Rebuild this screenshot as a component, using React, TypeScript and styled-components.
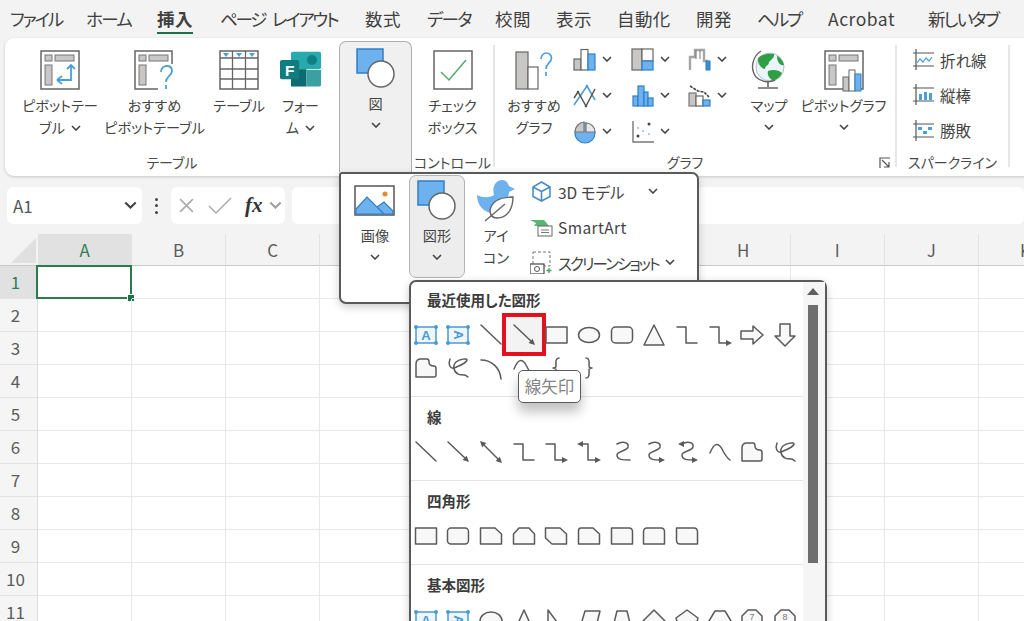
import React from 'react';
import styled, { createGlobalStyle } from 'styled-components';

const GlobalStyle = createGlobalStyle`
  html, body {
    margin: 0;
    padding: 0;
    background: #f3f3f3;
  }
  * {
    box-sizing: border-box;
  }
  body {
    font-family: "Noto Sans CJK JP", "Noto Sans", sans-serif;
    font-feature-settings: "palt";
    color: #444;
  }
`;

const Page = styled.div`
  position: relative;
  width: 1024px;
  height: 621px;
  overflow: hidden;
  background: #f3f3f3;
`;

/* ---------- tabs ---------- */

const TabBar = styled.div`
  display: flex;
  height: 38px;
  padding: 0 0 0 10px;
`;

const Tab = styled.div<{ $w: number }>`
  flex: none;
  width: ${(p) => p.$w}px;
`;

const TabText = styled.span<{ $active?: boolean; $sp: number }>`
  display: inline-block;
  height: 34px;
  line-height: 38px;
  white-space: nowrap;
  font-size: 17.5px;
  letter-spacing: ${(p) => p.$sp}px;
  word-spacing: 5px;
  font-weight: ${(p) => (p.$active ? 700 : 400)};
  color: #404040;
  border-bottom: ${(p) => (p.$active ? '2px solid #1e7145' : '2px solid transparent')};
`;

/* ---------- ribbon ---------- */

const Ribbon = styled.div`
  display: flex;
  width: 1040px;
  height: 138px;
  margin-left: 5px;
  background: #fff;
  border-radius: 9px;
  box-shadow: 0 1px 3px rgba(0, 0, 0, 0.18);
`;

const Group = styled.div<{ $w: number }>`
  display: flex;
  flex-direction: column;
  flex: none;
  width: ${(p) => p.$w}px;
`;

const GroupBody = styled.div<{ $pad?: number }>`
  display: flex;
  flex: none;
  height: 110px;
  padding-left: ${(p) => p.$pad ?? 0}px;
`;

const GroupFoot = styled.div`
  display: flex;
  align-items: center;
  height: 28px;
`;

const GroupLabel = styled.div`
  flex: 1;
  text-align: center;
  font-size: 14px;
  color: #4a4a4a;
  white-space: nowrap;
`;

const Launcher = styled.svg`
  flex: none;
  width: 12px;
  height: 12px;
  margin: 2px 4px 0 4px;
`;

const Separator = styled.div`
  flex: none;
  width: 2px;
  height: 122px;
  margin-top: 7px;
  background: #e6e6e6;
`;

const BigButton = styled.div<{ $w: number; $top?: number }>`
  display: flex;
  flex-direction: column;
  align-items: center;
  flex: none;
  width: ${(p) => p.$w}px;
  padding-top: ${(p) => p.$top ?? 12}px;
`;

const BigIcon = styled.svg`
  display: block;
  flex: none;
  width: 42px;
  height: 42px;
`;

const BigLabel = styled.div`
  margin-top: 2px;
  font-size: 14.2px;
  line-height: 22px;
  text-align: center;
  white-space: nowrap;
  color: #444;
`;

const ShapeButton = styled.div`
  display: flex;
  flex-direction: column;
  align-items: center;
  flex: none;
  width: 73px;
  height: 131px;
  margin-top: 3px;
  padding-top: 6px;
  background: #f0f0f0;
  border: 1px solid #adadad;
  border-bottom: 0;
  border-radius: 7px 7px 0 0;
`;

const ChevronMark = styled.svg<{ $inline?: boolean; $color?: string; $wide?: boolean }>`
  display: ${(p) => (p.$inline ? 'inline-block' : 'block')};
  flex: none;
  width: ${(p) => (p.$wide ? 13 : 10)}px;
  height: ${(p) => (p.$wide ? 8 : 6)}px;
  margin: ${(p) => (p.$inline ? '0 0 2px 6px' : '8px auto 0')};
  fill: none;
  stroke: ${(p) => p.$color ?? '#444'};
  stroke-width: 1.6;
`;

const SmallGrid = styled.div`
  display: grid;
  grid-template-columns: repeat(3, 57.5px);
  grid-auto-rows: 36px;
  flex: none;
  width: 172.5px;
  padding-top: 4px;
`;

const SmallChart = styled.div`
  display: flex;
  align-items: center;

  svg:first-child {
    width: 24px;
    height: 24px;
    flex: none;
    margin-right: -1px;
  }
`;

const Spacer = styled.div<{ $w: number }>`
  flex: none;
  width: ${(p) => p.$w}px;
`;

const SparkList = styled.div`
  display: flex;
  flex-direction: column;
  padding: 4px 0 0 16px;
`;

const SparkItem = styled.div`
  display: flex;
  align-items: center;
  gap: 6px;
  height: 36px;
  font-size: 15.5px;
  color: #444;

  svg {
    flex: none;
    width: 21px;
    height: 21px;
  }
`;

/* ---------- formula row ---------- */

const FormulaRow = styled.div`
  display: flex;
  align-items: center;
  height: 37px;
  margin-top: 11px;
  padding-left: 7px;
`;

const NameBox = styled.div`
  display: flex;
  align-items: center;
  justify-content: space-between;
  flex: none;
  width: 135px;
  height: 37px;
  padding: 0 5px 0 6px;
  font-size: 17px;
  color: #555;
  background: #fff;
  border-radius: 6px;
`;

const Dots = styled.div`
  display: flex;
  flex-direction: column;
  align-items: center;
  gap: 3.5px;
  flex: none;
  width: 29px;

  i {
    width: 3px;
    height: 3px;
    border-radius: 50%;
    background: #444;
  }
`;

const FxBox = styled.div`
  display: flex;
  align-items: center;
  flex: none;
  width: 114px;
  height: 37px;
  padding-left: 7px;
  background: #fff;
  border-radius: 6px;
`;

const CancelMark = styled.svg`
  flex: none;
  width: 17px;
  height: 17px;
  fill: none;
  stroke: #a8a8a8;
  stroke-width: 1.4;
`;

const EnterMark = styled.svg`
  flex: none;
  width: 24px;
  height: 17px;
  margin-left: 13px;
  fill: none;
  stroke: #a8a8a8;
  stroke-width: 1.4;
`;

const FxMark = styled.span`
  margin: 0 0 0 13px;
  font-family: "Liberation Serif", serif;
  font-style: italic;
  font-weight: 700;
  font-size: 21px;
  color: #333;
`;

const FormulaInput = styled.div`
  flex: 1;
  height: 37px;
  margin-left: 7px;
  background: #fff;
  border-radius: 6px;
`;

/* ---------- sheet ---------- */

const Sheet = styled.div`
  display: grid;
  grid-template-columns: 38px repeat(11, 94.1px);
  grid-template-rows: 32px;
  grid-auto-rows: 33px;
  margin-top: 10px;
  background: #fff;
`;

const Corner = styled.div`
  display: flex;
  align-items: flex-end;
  justify-content: flex-end;
  padding: 0 2px 2px 0;
  background: #f3f3f3;
  border-bottom: 1px solid #c8c8c8;

  &::after {
    content: '';
    width: 25px;
    height: 25px;
    background: #e0e0e0;
    clip-path: polygon(100% 0, 100% 100%, 0 100%);
  }
`;

const ColHead = styled.div<{ $on?: boolean }>`
  display: flex;
  align-items: center;
  justify-content: center;
  font-size: 17px;
  color: ${(p) => (p.$on ? '#2e7d5b' : '#5c5c5c')};
  background: ${(p) => (p.$on ? '#e1e1e1' : '#f3f3f3')};
  border-right: 1px solid #e2e2e2;
  border-bottom: 1px solid #c8c8c8;
`;

const RowHead = styled.div<{ $on?: boolean }>`
  display: flex;
  align-items: center;
  justify-content: center;
  padding: 0 6px 2px 0;
  font-size: 17px;
  color: ${(p) => (p.$on ? '#2e7d5b' : '#5c5c5c')};
  background: ${(p) => (p.$on ? '#e1e1e1' : '#f5f5f5')};
  border-bottom: 1px solid #e2e2e2;
  border-right: 1px solid #dcdcdc;
`;

const Cell = styled.div`
  position: relative;
  border-right: 1px solid #e8e8e8;
  border-bottom: 1px solid #e8e8e8;
`;

const Selection = styled.div`
  position: absolute;
  inset: -1px -1px -1px -2px;
  border: 2px solid #2b7a50;

  &::after {
    content: '';
    position: absolute;
    right: -4px;
    bottom: -4px;
    width: 6px;
    height: 6px;
    background: #1e7145;
    outline: 1px solid #fff;
  }
`;

/* ---------- insert picture popup ---------- */

const IllustrationMenu = styled.div`
  position: absolute;
  left: 339px;
  top: 172px;
  z-index: 2;
  display: flex;
  width: 360px;
  height: 132px;
  background: #fff;
  border: 2px solid #5a5a5a;
  border-radius: 3px 7px 7px 7px;
  box-shadow: 0 3px 8px rgba(0, 0, 0, 0.2);
`;

const MenuButton = styled.div<{ $w: number; $on?: boolean }>`
  display: flex;
  flex-direction: column;
  align-items: center;
  flex: none;
  width: ${(p) => p.$w}px;
  height: 103px;
  margin-top: 1px;
  padding-top: ${(p) => (p.$on ? 4 : 5)}px;
  background: ${(p) => (p.$on ? '#ededed' : 'transparent')};
  border: ${(p) => (p.$on ? '1px solid #b4b4b4' : '0')};
  border-radius: 7px;
`;

const MenuList = styled.div`
  display: flex;
  flex-direction: column;
  padding: 0 0 0 3px;
`;

const MenuItem = styled.div<{ $sp?: number }>`
  display: flex;
  align-items: center;
  height: 35.5px;
  font-size: 15.5px;
  letter-spacing: ${(p) => p.$sp ?? 0}px;
  white-space: nowrap;
  color: #444;

  svg:first-child {
    flex: none;
    width: 23px;
    height: 23px;
    margin-right: 5px;
  }
`;

/* ---------- shapes gallery ---------- */

const ShapesMenu = styled.div`
  position: absolute;
  left: 409px;
  top: 280px;
  z-index: 3;
  display: flex;
  width: 418px;
  height: 360px;
  background: #fff;
  border: 2px solid #5a5a5a;
  border-radius: 7px 7px 0 0;
  box-shadow: 0 3px 8px rgba(0, 0, 0, 0.2);
`;

const ShapesList = styled.div`
  flex: 1;
  min-width: 0;
`;

const Section = styled.div`
  padding-bottom: 12px;
  border-bottom: 1px solid #e3e3e3;

  &:last-child {
    border-bottom: 0;
  }
`;

const SectionTitle = styled.div<{ $first?: boolean }>`
  display: flex;
  align-items: center;
  height: ${(p) => (p.$first ? 36 : 38)}px;
  padding: ${(p) => (p.$first ? '0 0 2px 16px' : '0 0 0 16px')};
  font-size: 14.5px;
  font-weight: 700;
  color: #3c3c3c;
`;

const ShapeGrid = styled.div`
  display: grid;
  grid-template-columns: repeat(12, 32.65px);
  grid-auto-rows: 33px;
  margin-left: -1.5px;
`;

const ShapeCell = styled.div`
  position: relative;
  display: flex;
  align-items: center;
  justify-content: center;
`;

const ShapeSvg = styled.svg`
  position: relative;
  width: 24px;
  height: 24px;
  overflow: visible;
  fill: #f8f8f8;
  stroke: #5a5a5a;
  stroke-width: 1.5;
  stroke-linejoin: round;
  stroke-linecap: round;
`;

const RedBox = styled.div`
  position: absolute;
  left: -5.5px;
  top: -5.5px;
  width: 44px;
  height: 43px;
  background: #f3f3f3;
  border: 4px solid #e3101e;
`;

const Tooltip = styled.div`
  position: absolute;
  left: 107px;
  top: 88px;
  z-index: 4;
  width: 63px;
  height: 33px;
  line-height: 30px;
  text-align: center;
  font-size: 16.5px;
  color: #848484;
  background: #fff;
  border: 1.5px solid #5a5a5a;
  border-radius: 5px;
  box-shadow: 0 9px 12px rgba(0, 0, 0, 0.24);
`;

const ScrollTrack = styled.div`
  display: flex;
  flex-direction: column;
  align-items: center;
  flex: none;
  width: 22px;
  padding-right: 2px;
  background: #f5f5f5;
`;

const ScrollUp = styled.div`
  width: 0;
  height: 0;
  margin-top: 6px;
  border-left: 6px solid transparent;
  border-right: 6px solid transparent;
  border-bottom: 7px solid #5f5f5f;
`;

const ScrollThumb = styled.div`
  width: 10px;
  height: 258px;
  margin-top: 10px;
  background: #6e6e6e;
`;

/* ---------- icons ---------- */

const Chevron: React.FC<{ inline?: boolean; color?: string; wide?: boolean }> = ({ inline, color, wide }) => (
  <ChevronMark $inline={inline} $color={color} $wide={wide} viewBox="0 0 10 6">
    <path d="M1 1l4 4 4-4" />
  </ChevronMark>
);

const PivotBase = () => (
  <>
    <rect x="2" y="1" width="38" height="38" fill="#fff" stroke="#666" strokeWidth="1.5" />
    <rect x="6" y="5" width="7" height="6" fill="#c9c7c5" stroke="#777" />
    <rect x="16" y="5" width="19" height="6" fill="#c9c7c5" stroke="#777" />
    <rect x="6" y="15" width="7" height="20" fill="#c9c7c5" stroke="#777" />
  </>
);

const PivotIcon = () => (
  <BigIcon viewBox="0 0 42 42">
    <PivotBase />
    <path d="M32 15v15H19M18 30l5-4M18 30l5 4M28 19l4-4 4 4" fill="none" stroke="#4a9fd8" strokeWidth="1.8" />
  </BigIcon>
);

const PivotHelpIcon = () => (
  <BigIcon viewBox="0 0 42 42">
    <rect x="1" y="1" width="37" height="38" fill="#fff" stroke="#666" strokeWidth="1.5" />
    <rect x="5" y="5" width="7" height="6" fill="#c9c7c5" stroke="#777" />
    <rect x="15" y="5" width="19" height="6" fill="#c9c7c5" stroke="#777" />
    <rect x="5" y="15" width="7" height="20" fill="#c9c7c5" stroke="#777" />
    <rect x="24" y="14" width="18" height="28" fill="#fff" />
    <path d="M27 22c0-4 3-6 6-6s5 2 5 5c0 5-6 5-6 11M32 35v4" fill="none" stroke="#4a9fd8" strokeWidth="1.8" />
  </BigIcon>
);

const TableIcon = () => (
  <BigIcon viewBox="0 0 42 42">
    <rect x="2" y="1" width="38" height="38" fill="#fff" stroke="#666" strokeWidth="1.5" />
    <path d="M2 8h38M2 19h38M2 29h38M14.5 1v38M27.5 1v38" stroke="#666" strokeWidth="1.3" />
    <path d="M5 3h6l-3 4zM18 3h6l-3 4zM31 3h6l-3 4z" fill="#4a9fd8" />
  </BigIcon>
);

const FormsIcon = () => (
  <BigIcon viewBox="0 0 46 42">
    <rect x="12" y="0" width="33" height="19" rx="2" fill="#27a9ad" />
    <circle cx="35" cy="9" r="5.5" fill="#0f7f83" />
    <rect x="12" y="19" width="17" height="19" fill="#0c6b70" />
    <path d="M29 20h16v16a2 2 0 0 1-2 2H29z" fill="#3ba0a2" />
    <rect x="0" y="9" width="21" height="21" rx="2" fill="#107c80" />
    <text x="5.5" y="26" fontFamily="Liberation Sans, sans-serif" fontWeight="700" fontSize="17" fill="#fff">F</text>
  </BigIcon>
);

const CircleSquareIcon = () => (
  <BigIcon viewBox="0 0 42 42">
    <rect x="2" y="1" width="26" height="24" fill="#6db2ee" stroke="#2f7fc9" strokeWidth="1.5" />
    <circle cx="26" cy="26" r="13" fill="#fff" stroke="#666" strokeWidth="1.5" />
  </BigIcon>
);

const CheckIcon = () => (
  <BigIcon viewBox="0 0 42 42">
    <rect x="2" y="1" width="38" height="38" fill="#fff" stroke="#666" strokeWidth="1.5" />
    <path d="M9 22l8 8 17-20" fill="none" stroke="#58a86d" strokeWidth="1.5" />
  </BigIcon>
);

const SuggestChartIcon = () => (
  <BigIcon viewBox="0 0 42 42">
    <rect x="3" y="2" width="12" height="37" fill="#c9c7c5" stroke="#666" strokeWidth="1.2" />
    <rect x="15" y="17" width="10" height="22" fill="#fff" stroke="#666" strokeWidth="1.2" />
    <path d="M28 9c0-4 3-6 5.500-6s5 2 5 5c0 5-5.500 5-5.500 11M33 22v4" fill="none" stroke="#4a9fd8" strokeWidth="1.7" />
  </BigIcon>
);

const GlobeIcon = () => (
  <BigIcon viewBox="0 0 42 42">
    <circle cx="22" cy="17" r="14" fill="#e9f4fb" stroke="#b5bec2" />
    <path d="M10 8c4-4 10-5 16-4 1 3-3 6-5 8 0 4-4 3-4 7-3 0-8-5-7-11zM29 6c3 1 6 5 7 9-4 1-7-3-7-9zM20 21c5-2 11-1 14 2-2 5-7 8-10 7-3-2-5-5-4-9z" fill="#2f9e44" />
    <path d="M13 1C4 7 2 19 8 27c5 5 13 6 19 3" fill="none" stroke="#666" strokeWidth="1.4" />
    <path d="M20 31v6M10 38h20" stroke="#666" strokeWidth="1.6" />
  </BigIcon>
);

const PivotChartIcon = () => (
  <BigIcon viewBox="0 0 42 42">
    <PivotBase />
    <rect x="20" y="27" width="6" height="14" fill="#c9c7c5" stroke="#666" />
    <rect x="26" y="20" width="6" height="21" fill="#fff" stroke="#666" />
    <rect x="32" y="24" width="6" height="17" fill="#6db2ee" stroke="#2f7fc9" />
  </BigIcon>
);

const smallCharts: React.ReactNode[] = [
  <g key="a" stroke="#666" strokeWidth="1.2">
    <rect x="1" y="11" width="7" height="11" fill="#c9c7c5" />
    <rect x="8" y="1.500" width="7" height="20.500" fill="#fff" />
    <rect x="15" y="6" width="7" height="16" fill="#6db2ee" stroke="#2f7fc9" />
  </g>,
  <g key="b" stroke="#666" strokeWidth="1.2">
    <rect x="1" y="1" width="10" height="21" fill="#c9c7c5" />
    <rect x="11" y="1" width="11" height="12" fill="#fff" />
    <rect x="11" y="13" width="11" height="9" fill="#6db2ee" stroke="#2f7fc9" />
  </g>,
  <g key="c" fill="none">
    <path d="M2 22V9h5V2h9v11h4" stroke="#a5a5a5" strokeWidth="2.4" />
    <path d="M8 2v9M12 2v9" stroke="#777" strokeWidth="1" />
    <rect x="18" y="13" width="4" height="9" fill="#3b8ed0" stroke="#2f7fc9" strokeWidth="1" />
  </g>,
  <g key="d" fill="none" strokeWidth="1.4">
    <path d="M1 21L14 2l8 14" stroke="#4a9fd8" strokeWidth="1.6" />
    <path d="M1 14l4-6 8 14 9-17" stroke="#555" strokeWidth="1.5" />
    <circle cx="5" cy="8" r="1.300" fill="#555" />
    <circle cx="13" cy="22" r="1.300" fill="#555" />
    <circle cx="14" cy="2" r="1.300" fill="#4a9fd8" />
  </g>,
  <g key="e" fill="#6db2ee" stroke="#2f7fc9" strokeWidth="1.2">
    <rect x="2" y="12" width="5" height="10" />
    <rect x="7" y="2" width="6" height="20" />
    <rect x="13" y="8" width="4" height="14" />
    <rect x="17" y="14" width="5" height="8" />
  </g>,
  <g key="f" strokeWidth="1.2">
    <rect x="1" y="9" width="7" height="13" fill="#c9c7c5" stroke="#777" />
    <rect x="8" y="12" width="7" height="10" fill="#fff" stroke="#666" />
    <rect x="15" y="16" width="7" height="6" fill="#6db2ee" stroke="#2f7fc9" />
    <path d="M2 2l8 5 6 1 5 5" fill="none" stroke="#444" strokeWidth="1.6" strokeDasharray="3 1" />
  </g>,
  <g key="g" strokeWidth="1.2">
    <circle cx="12" cy="13" r="10" fill="#6db2ee" stroke="#2f7fc9" />
    <path d="M11 12V2A10 10 0 0 0 2 12z" fill="#c9c7c5" stroke="#777" />
    <path d="M13 12V3a9 9 0 0 1 9 9z" fill="#e8e8e8" stroke="#777" />
  </g>,
  <g key="h">
    <path d="M2 1v21h21" fill="none" stroke="#777" strokeWidth="1.4" />
    <circle cx="7" cy="16" r="1.500" fill="#444" />
    <circle cx="18" cy="4" r="1.500" fill="#444" />
    <circle cx="7" cy="8" r="1" fill="#8fc1e8" />
    <circle cx="12" cy="11" r="1" fill="#8fc1e8" />
    <circle cx="18" cy="14" r="1" fill="#8fc1e8" />
  </g>,
];

const Sparkline: React.FC<{ kind: 'line' | 'bar' | 'win' }> = ({ kind }) => (
  <svg viewBox="0 0 21 21">
    <path d="M3 0v21M0 4h21M0 17h21" stroke="#555" strokeWidth="1.2" fill="none" />
    {kind === 'line' && <path d="M4 14l3-4 3 3 3-4 3 3 3-4" stroke="#4a9fd8" strokeWidth="1.2" fill="none" />}
    {kind === 'bar' && <path d="M6 10h3v6H6zM11 8h3v8h-3zM16 9h3v7h-3z" fill="#4a9fd8" />}
    {kind === 'win' && <path d="M5 7h4v3H5zM15 7h4v3h-4zM10 11h4v3h-4z" fill="#4a9fd8" />}
  </svg>
);

const PictureIcon = () => (
  <BigIcon viewBox="0 0 42 42">
    <rect x="1" y="6" width="39" height="29" fill="#fff" stroke="#555" strokeWidth="1.5" />
    <path d="M2 29l11-12 17 17H2zM23 27l7-5 9 9v3H30z" fill="#6db2ee" stroke="#2f7fc9" strokeWidth="1.2" />
    <circle cx="31" cy="14" r="2.500" fill="#e88a2a" />
  </BigIcon>
);

const DuckIcon = () => (
  <BigIcon viewBox="0 0 42 42">
    <path d="M2 15c6 3 12 3 17 0-2-7 1-15 8-15 4 0 6 3 7 6l6 3-6 3c-1 10-6 20-14 21C10 34 2 26 2 15z" fill="#6db2ee" />
    <path d="M38 17c-10 0-21 3-23 13 0 6 3 8 7 8 11 0 16-10 16-21z" fill="#fff" stroke="#666" strokeWidth="1.4" />
    <path d="M10 41l20-17" stroke="#666" strokeWidth="1.4" />
  </BigIcon>
);

const CubeIcon = () => (
  <svg viewBox="0 0 23 23" fill="none" stroke="#4a8ec6" strokeWidth="1.6">
    <path d="M11.500 2l8.500 5v9.500L11.500 21 3 16.500V7zM11.500 11.500L3 7M11.500 11.500l8.500-4.500M11.500 11.500V21" />
  </svg>
);

const SmartArtIcon = () => (
  <svg viewBox="0 0 23 23">
    <path d="M0 4h14l5 6H4l2-3z" fill="#5ab56f" />
    <rect x="8" y="10" width="14" height="10" fill="#fff" stroke="#666" />
    <path d="M11 14h8M11 16.500h8" stroke="#777" />
  </svg>
);

const ShotIcon = () => (
  <svg viewBox="0 0 23 23">
    <rect x="3" y="1" width="17" height="14" fill="none" stroke="#777" strokeDasharray="3 2" />
    <rect x="0" y="13" width="14" height="10" fill="#fff" stroke="#555" strokeWidth="1.3" />
    <circle cx="7" cy="18" r="2.500" fill="none" stroke="#555" />
    <path d="M19 17v5M16.500 19.500h5" stroke="#3aa35a" strokeWidth="1.3" />
  </svg>
);

/* ---------- gallery shapes ---------- */

const head = (x: number, y: number, rot: number) => (
  <path d="M0 0l-6-3v6z" transform={`translate(${x} ${y}) rotate(${rot})`} fill="#5a5a5a" stroke="none" />
);

const cornerDots = [[2, 4], [22, 4], [2, 20], [22, 20]];

const boxFrame = (
  <>
    <rect x="2" y="4" width="20" height="16" fill="#eef5fb" stroke="#4a9bd4" strokeWidth="1.5" />
    {cornerDots.map(([x, y]) => (
      <circle key={`${x}${y}`} cx={x} cy={y} r="2" fill="#4a9bd4" stroke="none" />
    ))}
  </>
);

const glyphProps = {
  fontFamily: 'Liberation Sans, sans-serif',
  fontWeight: 700,
  fontSize: 13,
  fill: '#4a9bd4',
  stroke: 'none',
  textAnchor: 'middle' as const,
};

const numberProps = {
  fontFamily: 'Liberation Sans, sans-serif',
  fontSize: 9,
  fill: '#777',
  stroke: 'none',
  textAnchor: 'middle' as const,
};

const freeform = 'M2 21V8Q2 3 7 3h6q2 0 2 3 0 4 5 4 2 0 2 3v6q0 2-2 2z';
const scribble = 'M4 3C2 8 4 13 8 12c4-2 12-4 13-8 0-2-7-1-11 2-4 4-2 10 2 12 3 2 6-1 10 3';
const curve = 'M2 13C6 3 10 2 14 9c2 4 5 9 8 11';
const sCurve = 'M7 4c5-3 12-2 11 3-1 4-11 4-11 8 0 5 6 5 13 5';
const sCurveHead = 'M7 4c5-3 12-2 11 3-1 4-11 4-11 8 0 5 6 5 11 5';

const shapes: Record<string, React.ReactNode> = {
  textA: <>{boxFrame}<text x="12" y="17" {...glyphProps}>A</text></>,
  textV: <>{boxFrame}<text x="12" y="16.500" {...glyphProps} transform="rotate(90 12 12)">A</text></>,
  line: <path d="M2 2l20 19" fill="none" />,
  arrow: <><path d="M2 2l18 17" fill="none" />{head(23, 22, 43)}</>,
  arrow2: <><path d="M4 4l16 16" fill="none" />{head(1, 1, 225)}{head(23, 23, 45)}</>,
  rect: <rect x="2" y="4" width="21" height="16" />,
  oval: <ellipse cx="12" cy="12" rx="10.500" ry="7.500" />,
  round: <rect x="1.500" y="4" width="21" height="16" rx="4" />,
  triangle: <path d="M12 2l10 20H2z" />,
  elbow: <path d="M2 4h9v16h11" fill="none" />,
  elbowArrow: <><path d="M2 4h9v16h8" fill="none" />{head(24, 20, 0)}</>,
  elbow2: <><path d="M5 4h6v16h8" fill="none" />{head(0, 4, 180)}{head(24, 20, 0)}</>,
  blockRight: <path d="M1 8h12V3l10 9-10 9v-5H1z" />,
  blockDown: <path d="M7 1h10v12h5L12 23 2 13h5z" />,
  freeform: <path d={freeform} />,
  scribble: <path d={scribble} fill="none" />,
  arc: <path d="M2 4c11 0 19 8 20 19" fill="none" />,
  curve: <path d={curve} fill="none" />,
  braceL: <path d="M15 2c-4 0-3 5-3 8 0 2-2 2-3 2 1 0 3 0 3 2 0 3-1 8 3 8" fill="none" />,
  braceR: <path d="M9 2c4 0 3 5 3 8 0 2 2 2 3 2-1 0-3 0-3 2 0 3 1 8-3 8" fill="none" />,
  sCurve: <path d={sCurve} fill="none" />,
  sCurveArrow: <><path d={sCurveHead} fill="none" />{head(23, 20, 0)}</>,
  sCurve2: <><path d={sCurveHead} fill="none" />{head(3, 4, 180)}{head(23, 20, 0)}</>,
  rectFlat: <rect x="1.500" y="4" width="21" height="16" />,
  roundAll: <rect x="1.500" y="4" width="21" height="16" rx="3.500" />,
  snip1: <path d="M1.500 4H16l6.500 6v10h-21z" />,
  snip2: <path d="M7 4h10l5.500 6v10h-21V10z" />,
  snipDiag: <path d="M1.500 4H16l6.500 6v10H8l-6.500-6z" />,
  snipRound: <path d="M4 4h12l6.500 6v10h-21V7q0-3 2.500-3z" />,
  round1: <path d="M1.500 4H19q3.500 0 3.500 4v12h-21z" />,
  round2: <path d="M5 4h14q3.500 0 3.500 4v12h-21V8q0-4 3.500-4z" />,
  roundDiag: <path d="M1.500 4H19q3.500 0 3.500 4v12H5q-3.500 0-3.500-4z" />,
  ovalTop: <ellipse cx="12" cy="13" rx="11" ry="9" />,
  triTop: <path d="M12 2l9 20H3z" />,
  rightTri: <path d="M4 2l15 20H4z" />,
  para: <path d="M8 3h15l-5 20H2z" />,
  trap: <path d="M7 3h10l5 20H2z" />,
  diamond: <path d="M12 2l11 11-11 11L1 13z" />,
  penta: <path d="M12 2l11 8-4 14H5L1 10z" />,
  hexa: <path d="M7 3h10l6 10-6 11H7L1 13z" />,
  hepta: <><path d="M8 2h8l6 6v16H2V8z" /><text x="12" y="12" {...numberProps}>7</text></>,
  octa: <><path d="M8 2h8l6 6v16H2V8z" /><text x="12" y="12" {...numberProps}>8</text></>,
};

const recent = ['textA', 'textV', 'line', 'arrow', 'rect', 'oval', 'round', 'triangle', 'elbow', 'elbowArrow', 'blockRight', 'blockDown', 'freeform', 'scribble', 'arc', 'curve', 'braceL', 'braceR'];
const lines = ['line', 'arrow', 'arrow2', 'elbow', 'elbowArrow', 'elbow2', 'sCurve', 'sCurveArrow', 'sCurve2', 'curve', 'freeform', 'scribble'];
const rects = ['rectFlat', 'roundAll', 'snip1', 'snip2', 'snipDiag', 'snipRound', 'round1', 'round2', 'roundDiag'];
const basics = ['textA', 'textV', 'ovalTop', 'triTop', 'rightTri', 'para', 'trap', 'diamond', 'penta', 'hexa', 'hepta', 'octa'];

const Shape: React.FC<{ id: string; hot?: boolean }> = ({ id, hot }) => (
  <ShapeCell>
    {hot && <RedBox />}
    <ShapeSvg viewBox="0 0 24 24">{shapes[id]}</ShapeSvg>
  </ShapeCell>
);

const tabs = [
  { label: 'ファイル', w: 76, sp: -2.1 },
  { label: 'ホーム', w: 71, sp: -1.7 },
  { label: '挿入', w: 63, sp: 0.5 },
  { label: 'ページ レイアウト', w: 145, sp: -2.2 },
  { label: '数式', w: 62, sp: 0.5 },
  { label: 'データ', w: 68, sp: -1.7 },
  { label: '校閲', w: 61, sp: 0.5 },
  { label: '表示', w: 61, sp: 0.5 },
  { label: '自動化', w: 79, sp: 0.4 },
  { label: '開発', w: 61, sp: 0.5 },
  { label: 'ヘルプ', w: 71, sp: -2 },
  { label: 'Acrobat', w: 100, sp: 0.5 },
  { label: '新しいタブ', w: 96, sp: -1.8 },
];
const columns = ['A', 'B', 'C', 'D', 'E', 'F', 'G', 'H', 'I', 'J', 'K'];
const rows = [1, 2, 3, 4, 5, 6, 7, 8, 9, 10, 11];

const App: React.FC = () => {
  return (
    <Page>
      <GlobalStyle />
      <TabBar>
        {tabs.map((t) => (
          <Tab key={t.label} $w={t.w}>
            <TabText $sp={t.sp} $active={t.label === '挿入'}>{t.label}</TabText>
          </Tab>
        ))}
      </TabBar>

      <Ribbon>
        <Group $w={334}>
          <GroupBody $pad={10}>
            <BigButton $w={90}>
              <PivotIcon />
              <BigLabel>ピボットテー<br />ブル<Chevron inline /></BigLabel>
            </BigButton>
            <BigButton $w={99}>
              <PivotHelpIcon />
              <BigLabel>おすすめ<br />ピボットテーブル</BigLabel>
            </BigButton>
            <BigButton $w={70}>
              <TableIcon />
              <BigLabel>テーブル</BigLabel>
            </BigButton>
            <BigButton $w={53}>
              <FormsIcon />
              <BigLabel>フォー<br />ム<Chevron inline /></BigLabel>
            </BigButton>
          </GroupBody>
          <GroupFoot><GroupLabel>テーブル</GroupLabel></GroupFoot>
        </Group>

        <ShapeButton>
          <CircleSquareIcon />
          <BigLabel>図</BigLabel>
          <Chevron />
        </ShapeButton>

        <Group $w={81}>
          <GroupBody>
            <BigButton $w={81}>
              <CheckIcon />
              <BigLabel>チェック<br />ボックス</BigLabel>
            </BigButton>
          </GroupBody>
          <GroupFoot><GroupLabel>コントロール</GroupLabel></GroupFoot>
        </Group>
        <Separator />

        <Group $w={400}>
          <GroupBody>
            <BigButton $w={78}>
              <SuggestChartIcon />
              <BigLabel>おすすめ<br />グラフ</BigLabel>
            </BigButton>
            <SmallGrid>
              {smallCharts.map((c, i) => (
                <SmallChart key={i}>
                  <svg viewBox="0 0 24 24">{c}</svg>
                  <Chevron inline />
                </SmallChart>
              ))}
            </SmallGrid>
            <BigButton $w={47}>
              <GlobeIcon />
              <BigLabel>マップ</BigLabel>
              <Chevron />
            </BigButton>
            <BigButton $w={102}>
              <PivotChartIcon />
              <BigLabel>ピボットグラフ</BigLabel>
              <Chevron />
            </BigButton>
          </GroupBody>
          <GroupFoot>
            <GroupLabel>グラフ</GroupLabel>
            <Launcher viewBox="0 0 12 12" fill="none" stroke="#555" strokeWidth="1.2">
              <path d="M1 11V1h10M3 3l7 7M10 5v5H5" />
            </Launcher>
          </GroupFoot>
        </Group>
        <Separator />

        <Group $w={111}>
          <GroupBody>
            <SparkList>
              <SparkItem><Sparkline kind="line" />折れ線</SparkItem>
              <SparkItem><Sparkline kind="bar" />縦棒</SparkItem>
              <SparkItem><Sparkline kind="win" />勝敗</SparkItem>
            </SparkList>
          </GroupBody>
          <GroupFoot><GroupLabel>スパークライン</GroupLabel></GroupFoot>
        </Group>
        <Separator />
      </Ribbon>

      <FormulaRow>
        <NameBox>A1<Chevron inline wide /></NameBox>
        <Dots><i /><i /><i /></Dots>
        <FxBox>
          <CancelMark viewBox="0 0 16 16"><path d="M2 2l12 12M14 2L2 14" /></CancelMark>
          <EnterMark viewBox="0 0 24 17"><path d="M1 9l7 7L23 1" /></EnterMark>
          <FxMark>fx</FxMark>
          <Chevron inline wide color="#a0a0a0" />
        </FxBox>
        <FormulaInput />
      </FormulaRow>

      <Sheet>
        <Corner />
        {columns.map((c) => (
          <ColHead key={c} $on={c === 'A'}>{c}</ColHead>
        ))}
        {rows.map((r) => (
          <React.Fragment key={r}>
            <RowHead $on={r === 1}>{r}</RowHead>
            {columns.map((c) => (
              <Cell key={c}>{r === 1 && c === 'A' && <Selection />}</Cell>
            ))}
          </React.Fragment>
        ))}
      </Sheet>

      <IllustrationMenu>
        <MenuButton $w={68}>
          <PictureIcon />
          <BigLabel>画像</BigLabel>
          <Chevron />
        </MenuButton>
        <MenuButton $w={56} $on>
          <CircleSquareIcon />
          <BigLabel>図形</BigLabel>
          <Chevron />
        </MenuButton>
        <MenuButton $w={62}>
          <DuckIcon />
          <BigLabel>アイ<br />コン</BigLabel>
        </MenuButton>
        <MenuList>
          <MenuItem><CubeIcon />3D モデル<Spacer $w={18} /><Chevron inline /></MenuItem>
          <MenuItem $sp={0.4}><SmartArtIcon />SmartArt</MenuItem>
          <MenuItem $sp={-2}><ShotIcon />スクリーンショット<Chevron inline /></MenuItem>
        </MenuList>
      </IllustrationMenu>

      <ShapesMenu>
        <ShapesList>
          <Section>
            <SectionTitle $first>最近使用した図形</SectionTitle>
            <ShapeGrid>
              {recent.map((s, i) => (
                <Shape key={i} id={s} hot={i === 3} />
              ))}
            </ShapeGrid>
          </Section>
          <Section>
            <SectionTitle>線</SectionTitle>
            <ShapeGrid>
              {lines.map((s, i) => (
                <Shape key={i} id={s} />
              ))}
            </ShapeGrid>
          </Section>
          <Section>
            <SectionTitle>四角形</SectionTitle>
            <ShapeGrid>
              {rects.map((s, i) => (
                <Shape key={i} id={s} />
              ))}
            </ShapeGrid>
          </Section>
          <Section>
            <SectionTitle>基本図形</SectionTitle>
            <ShapeGrid>
              {basics.map((s, i) => (
                <Shape key={i} id={s} />
              ))}
            </ShapeGrid>
          </Section>
        </ShapesList>
        <ScrollTrack>
          <ScrollUp />
          <ScrollThumb />
        </ScrollTrack>
        <Tooltip>線矢印</Tooltip>
      </ShapesMenu>
    </Page>
  );
};

export default App;
